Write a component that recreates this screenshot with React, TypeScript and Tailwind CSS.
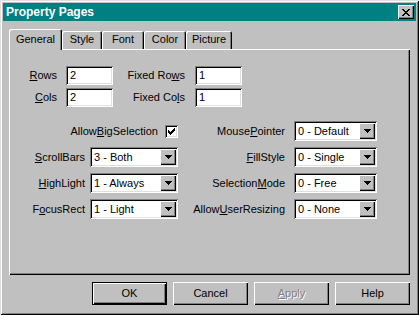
import React from "react";

const raised =
  "shadow-[inset_1px_1px_#ffffff,inset_-1px_-1px_#000000,inset_-2px_-2px_#808080]";
const sunken =
  "shadow-[inset_1px_1px_#808080,inset_-1px_-1px_#ffffff,inset_2px_2px_#000000,inset_-2px_-2px_#dfdfdf]";

function CloseGlyph() {
  // 8x7 pixel X, like the classic caption button
  const rows = [
    [0, 1, 6, 7],
    [1, 2, 5, 6],
    [2, 3, 4, 5],
    [3, 4],
    [2, 3, 4, 5],
    [1, 2, 5, 6],
    [0, 1, 6, 7],
  ];
  return (
    <svg width="8" height="7" shapeRendering="crispEdges">
      {rows.map((r, y) =>
        r.map((x) => <rect key={`${x}-${y}`} x={x} y={y} width="1" height="1" fill="#000" />)
      )}
    </svg>
  );
}

function Arrow() {
  return (
    <svg width="7" height="4" shapeRendering="crispEdges">
      <rect x="0" y="0" width="7" height="1" fill="#000" />
      <rect x="1" y="1" width="5" height="1" fill="#000" />
      <rect x="2" y="2" width="3" height="1" fill="#000" />
      <rect x="3" y="3" width="1" height="1" fill="#000" />
    </svg>
  );
}

function Check() {
  const tops = [2, 3, 4, 3, 2, 1, 0];
  return (
    <svg width="7" height="7" shapeRendering="crispEdges">
      {tops.map((t, x) => (
        <rect key={x} x={x} y={t} width="1" height="3" fill="#000" />
      ))}
    </svg>
  );
}

function TextBox({ value }: { value: string }) {
  return (
    <div className={`w-[47px] h-[19px] bg-white ${sunken} flex items-center pl-[4px]`}>
      {value}
    </div>
  );
}

function Combo({ value, w }: { value: string; w: string }) {
  return (
    <div className={`${w} h-[20px] bg-white ${sunken} flex items-center p-[2px]`}>
      <span className="flex-1 pl-[2px]">{value}</span>
      <div className={`w-[16px] h-full bg-[#c0c0c0] ${raised} flex items-center justify-center`}>
        <Arrow />
      </div>
    </div>
  );
}

function Tab({ label, w, selected }: { label: string; w: string; selected?: boolean }) {
  return (
    <div
      className={`${w} ${
        selected ? "h-[21px] relative z-10" : "h-[19px]"
      } bg-[#c0c0c0] rounded-t-[2px] shadow-[inset_1px_1px_#ffffff,inset_-1px_0_#000000,inset_-2px_0_#808080] flex items-center justify-center ${
        selected ? "pb-[1px]" : "pb-[2px]"
      }`}
    >
      {label}
    </div>
  );
}

function Button({ children, isDefault }: { children: React.ReactNode; isDefault?: boolean }) {
  if (isDefault) {
    return (
      <div className="w-[75px] h-[23px] border border-black">
        <div className={`w-full h-full bg-[#c0c0c0] ${raised} flex items-center justify-center`}>
          {children}
        </div>
      </div>
    );
  }
  return (
    <div className={`w-[75px] h-[23px] bg-[#c0c0c0] ${raised} flex items-center justify-center`}>
      {children}
    </div>
  );
}

export default function App() {
  return (
    <div className="w-[419px] h-[315px] bg-[#c0c0c0] p-[3px] flex flex-col text-[11px] leading-none text-black font-['Liberation_Sans',Arial,sans-serif] shadow-[inset_1px_1px_#dfdfdf,inset_-1px_-1px_#000000,inset_2px_2px_#ffffff,inset_-2px_-2px_#808080]">
      {/* caption */}
      <div className="h-[18px] bg-[#008080] flex items-center justify-between pl-[3px] pr-[2px]">
        <span className="text-white font-bold text-[12px]">Property Pages</span>
        <div className={`w-[16px] h-[14px] bg-[#c0c0c0] ${raised} flex items-center justify-center pr-[1px]`}>
          <CloseGlyph />
        </div>
      </div>

      <div className="px-[6px] flex flex-col">
        {/* tabs */}
        <div className="mt-[8px] h-[21px] flex items-end">
          <Tab label="General" w="w-[53px]" selected />
          <Tab label="Style" w="w-[40px]" />
          <Tab label="Font" w="w-[42px]" />
          <Tab label="Color" w="w-[42px]" />
          <Tab label="Picture" w="w-[46px]" />
        </div>

        {/* page */}
        <div className="-mt-[1px] h-[226px] pt-[17px] pl-[2px] bg-[#c0c0c0] shadow-[inset_1px_1px_#ffffff,inset_-1px_-1px_#000000,inset_-2px_-2px_#808080]">
          <div className="flex flex-col gap-[3px]">
            <div className="flex items-center h-[19px]">
              <span className="w-[55px] text-right pr-[9px]">
                <u>R</u>ows
              </span>
              <TextBox value="2" />
              <span className="w-[82px] text-right pr-[10px]">
                Fixed Ro<u>w</u>s
              </span>
              <TextBox value="1" />
            </div>
            <div className="flex items-center h-[19px]">
              <span className="w-[55px] text-right pr-[9px]">
                <u>C</u>ols
              </span>
              <TextBox value="2" />
              <span className="w-[82px] text-right pr-[10px]">
                Fixed Co<u>l</u>s
              </span>
              <TextBox value="1" />
            </div>
          </div>

          <div className="mt-[14px] flex flex-col gap-[6px]">
            <div className="flex items-center h-[20px]">
              <div className="w-[167px] flex items-center justify-end gap-[7px]">
                <span>
                  Allow<u>B</u>igSelection
                </span>
                <div className={`w-[13px] h-[13px] bg-white ${sunken} flex items-center justify-center`}>
                  <Check />
                </div>
              </div>
              <span className="w-[116px] text-right pr-[9px]">
                Mouse<u>P</u>ointer
              </span>
              <Combo value="0 - Default" w="w-[83px]" />
            </div>
            <div className="flex items-center h-[20px]">
              <span className="w-[79px] text-right pr-[5px]">
                <u>S</u>crollBars
              </span>
              <Combo value="3 - Both" w="w-[88px]" />
              <span className="w-[116px] text-right pr-[9px]">
                <u>F</u>illStyle
              </span>
              <Combo value="0 - Single" w="w-[83px]" />
            </div>
            <div className="flex items-center h-[20px]">
              <span className="w-[79px] text-right pr-[5px]">
                <u>H</u>ighLight
              </span>
              <Combo value="1 - Always" w="w-[88px]" />
              <span className="w-[116px] text-right pr-[9px]">
                Selection<u>M</u>ode
              </span>
              <Combo value="0 - Free" w="w-[83px]" />
            </div>
            <div className="flex items-center h-[20px]">
              <span className="w-[79px] text-right pr-[5px]">
                F<u>o</u>cusRect
              </span>
              <Combo value="1 - Light" w="w-[88px]" />
              <span className="w-[116px] text-right pr-[9px]">
                Allow<u>U</u>serResizing
              </span>
              <Combo value="0 - None" w="w-[83px]" />
            </div>
          </div>
        </div>

        {/* buttons */}
        <div className="mt-[7px] flex justify-end gap-[6px]">
          <Button isDefault>OK</Button>
          <Button>Cancel</Button>
          <Button>
            <span className="text-[#808080] [text-shadow:1px_1px_0_#ffffff]">
              <u>A</u>pply
            </span>
          </Button>
          <Button>Help</Button>
        </div>
      </div>
    </div>
  );
}
